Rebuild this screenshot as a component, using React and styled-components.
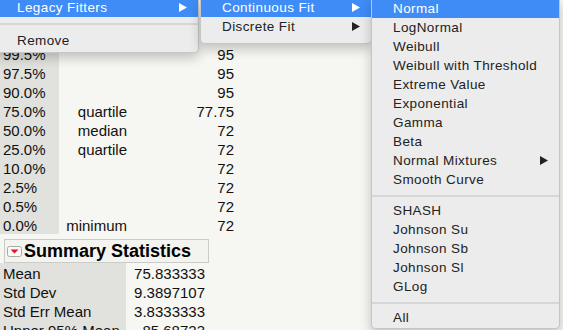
import React from "react";
import styled, { createGlobalStyle } from "styled-components";

const GlobalStyle = createGlobalStyle`
  html, body { margin: 0; padding: 0; background: #f6f6f2; overflow: hidden; }
  #root { width: 563px; height: 330px; }
`;

const Page = styled.div`
  position: relative;
  width: 563px;
  height: 330px;
  overflow: hidden;
  background: #f6f6f2;
  font-family: "Liberation Sans", Arial, sans-serif;
  color: #111;
`;

const Report = styled.div`
  padding-top: 25px;
  display: flex;
  flex-direction: column;
`;

const Table = styled.div`
  display: grid;
  grid-template-columns: ${(p) => p.$cols};
  grid-auto-rows: 19px;
  font-size: 15px;
`;

const Cell = styled.div`
  box-sizing: border-box;
  height: 19px;
  padding-top: 3px;
  line-height: 16px;
  white-space: nowrap;
  text-align: ${(p) => (p.$right ? "right" : "left")};
  padding-left: ${(p) => (p.$label ? "3px" : "0")};
  background: ${(p) => (p.$label ? "#e1e1dd" : "transparent")};
`;

const OutlineHeader = styled.div`
  margin: 5px 0 0 4px;
  width: 205px;
  height: 24px;
  box-sizing: border-box;
  border: 1px solid #cbcbc7;
  background: #f3f3ef;
  display: flex;
  align-items: center;
  gap: 2px;
  padding-left: 2px;
`;

const OutlineTitle = styled.span`
  font-weight: bold;
  font-size: 18px;
  line-height: 20px;
  color: #000;
`;

const MenuLayer = styled.div`
  position: absolute;
  top: 0;
  left: -5px;
  display: flex;
  align-items: flex-start;
  font-family: "Liberation Sans", Arial, sans-serif;
  font-size: 13.5px;
  letter-spacing: 0.4px;
`;

const Menu = styled.div`
  box-sizing: border-box;
  width: ${(p) => p.$width}px;
  margin-top: ${(p) => p.$top}px;
  margin-left: ${(p) => p.$left || 0}px;
  padding-bottom: ${(p) => p.$padBottom}px;
  background: #ececec;
  border: 1px solid rgba(0, 0, 0, 0.16);
  border-top: none;
  border-radius: 0 0 5px 5px;
  box-shadow: 0 5px 12px rgba(0, 0, 0, 0.22);
  display: flex;
  flex-direction: column;
`;

const Item = styled.div`
  height: 19px;
  display: flex;
  align-items: center;
  justify-content: space-between;
  padding: 0 11px 0 21px;
  white-space: nowrap;
  background: ${(p) => (p.$active ? "#3f8cf6" : "transparent")};
  color: ${(p) => (p.$active ? "#ffffff" : "#222222")};
`;

const Separator = styled.div`
  height: 2px;
  margin: ${(p) => p.$margin};
  background: #d6d6d6;
`;

const Arrow = () => (
  <svg width="8" height="9" viewBox="0 0 8 9">
    <polygon points="0,0 8,4.5 0,9" fill="currentColor" />
  </svg>
);

const DisclosureIcon = () => (
  <svg width="15" height="11" viewBox="0 0 15 11">
    <rect x="0.5" y="0.5" width="14" height="10" rx="2" fill="#fafafa" stroke="#a9a9a6" />
    <polygon points="3.5,3.5 11.5,3.5 7.5,7.5" fill="#e3141f" />
  </svg>
);

const quantiles = [
  ["100.0%", "maximum", "95"],
  ["99.5%", "", "95"],
  ["97.5%", "", "95"],
  ["90.0%", "", "95"],
  ["75.0%", "quartile", "77.75"],
  ["50.0%", "median", "72"],
  ["25.0%", "quartile", "72"],
  ["10.0%", "", "72"],
  ["2.5%", "", "72"],
  ["0.5%", "", "72"],
  ["0.0%", "minimum", "72"],
];

const summary = [
  ["Mean", "75.833333"],
  ["Std Dev", "9.3897107"],
  ["Std Err Mean", "3.8333333"],
  ["Upper 95% Mean", "85.68723"],
];

const fits1 = ["Normal", "LogNormal", "Weibull", "Weibull with Threshold", "Extreme Value", "Exponential", "Gamma", "Beta"];
const fits2 = ["SHASH", "Johnson Su", "Johnson Sb", "Johnson Sl", "GLog"];

export default function App() {
  return (
    <Page>
      <GlobalStyle />
      <Report>
        <Table $cols="59px 68px 107px">
          {quantiles.map(([q, note, v]) => (
            <React.Fragment key={q}>
              <Cell $label>{q}</Cell>
              <Cell $right>{note}</Cell>
              <Cell $right>{v}</Cell>
            </React.Fragment>
          ))}
        </Table>
        <OutlineHeader>
          <DisclosureIcon />
          <OutlineTitle>Summary Statistics</OutlineTitle>
        </OutlineHeader>
        <Table $cols="126px 79px">
          {summary.map(([k, v]) => (
            <React.Fragment key={k}>
              <Cell $label>{k}</Cell>
              <Cell $right>{v}</Cell>
            </React.Fragment>
          ))}
        </Table>
      </Report>

      <MenuLayer>
        <Menu $width={204} $top={-2} $padBottom={2.5}>
          <Item $active>
            <span>Legacy Fitters</span>
            <Arrow />
          </Item>
          <Separator $margin="6px 0 5.5px" />
          <Item>
            <span>Remove</span>
          </Item>
        </Menu>
        <Menu $width={172} $top={-2} $left={1} $padBottom={7}>
          <Item $active>
            <span>Continuous Fit</span>
            <Arrow />
          </Item>
          <Item>
            <span>Discrete Fit</span>
            <Arrow />
          </Item>
        </Menu>
        <Menu $width={189} $top={-1} $left={-1} $padBottom={0.5}>
          {fits1.map((f, i) => (
            <Item key={f} $active={i === 0}>
              <span>{f}</span>
            </Item>
          ))}
          <Item>
            <span>Normal Mixtures</span>
            <Arrow />
          </Item>
          <Item>
            <span>Smooth Curve</span>
          </Item>
          <Separator $margin="6px 0 4px" />
          {fits2.map((f) => (
            <Item key={f}>
              <span>{f}</span>
            </Item>
          ))}
          <Separator $margin="6px 0 4px" />
          <Item>
            <span>All</span>
          </Item>
        </Menu>
      </MenuLayer>
    </Page>
  );
}
